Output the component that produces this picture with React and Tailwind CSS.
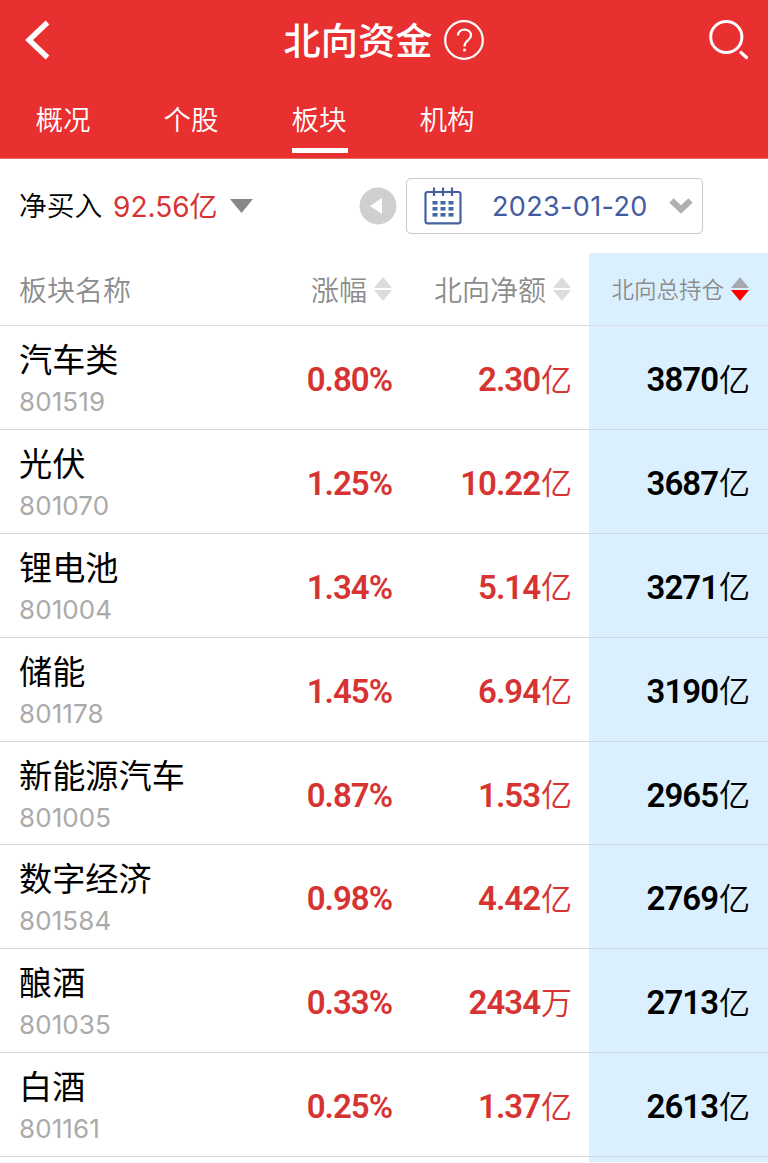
import React from 'react';

const TABS = ['概况', '个股', '板块', '机构'];

const ROWS = [
  { name: '汽车类', code: '801519', change: '0.80%', net: '2.30', netUnit: '亿', total: '3870' },
  { name: '光伏', code: '801070', change: '1.25%', net: '10.22', netUnit: '亿', total: '3687' },
  { name: '锂电池', code: '801004', change: '1.34%', net: '5.14', netUnit: '亿', total: '3271' },
  { name: '储能', code: '801178', change: '1.45%', net: '6.94', netUnit: '亿', total: '3190' },
  { name: '新能源汽车', code: '801005', change: '0.87%', net: '1.53', netUnit: '亿', total: '2965' },
  { name: '数字经济', code: '801584', change: '0.98%', net: '4.42', netUnit: '亿', total: '2769' },
  { name: '酿酒', code: '801035', change: '0.33%', net: '2434', netUnit: '万', total: '2713' },
  { name: '白酒', code: '801161', change: '0.25%', net: '1.37', netUnit: '亿', total: '2613' },
];

const SortIcon = ({ up = '#dcdcdc', down = '#dcdcdc' }) => (
  <svg width="18" height="24" viewBox="0 0 18 24" className="shrink-0">
    <path d="M9 0 L18 11 H0 Z" fill={up} />
    <path d="M0 13 H18 L9 24 Z" fill={down} />
  </svg>
);

const CalendarIcon = () => (
  <svg width="38" height="38" viewBox="0 0 38 38" fill="none" className="shrink-0">
    <rect x="1.5" y="5" width="35" height="31.3" rx="2" stroke="#4560a3" strokeWidth="2.2" />
    <path d="M10 0.5 V9 M19 0.5 V9 M28 0.5 V9" stroke="#4560a3" strokeWidth="2.2" />
    {[8.5, 16.5, 24.5].map((x) =>
      [14, 20, 26].map((y) => (
        <rect key={`${x}-${y}`} x={x} y={y} width="5" height="3.6" fill="#3f6aa6" />
      ))
    )}
  </svg>
);

const Value = ({ number, unit }) => (
  <span className="flex items-center h-10 whitespace-nowrap">
    <span className="font-['Roboto'] font-semibold text-[33px] leading-10 tracking-[-1px]">{number}</span>
    {unit && <span className="font-[350] text-[31px] leading-9 pb-px ml-px -mr-px">{unit}</span>}
  </span>
);

export default function App() {
  return (
    <div className="w-[768px] h-[1163px] overflow-hidden bg-white text-black font-['Inter','Noto_Sans_CJK_SC',sans-serif]">
      {/* 顶部导航 */}
      <header className="h-[159px] bg-[#e83030] text-white border-b border-[#e07060]">
        <div className="h-20 flex items-center justify-between pl-[22px] pr-[18px]">
          <svg width="28" height="40" viewBox="0 0 28 40" fill="none">
            <path d="M25.5 2.5 L7 20 L25.5 37.5" stroke="white" strokeWidth="5.4" />
          </svg>
          <div className="flex items-center gap-3 pl-[10px]">
            <h1 className="font-medium text-[37.2px] leading-[54px] pt-[3px]">北向资金</h1>
            <svg width="40" height="40" viewBox="0 0 40 40" fill="none" stroke="white">
              <circle cx="20" cy="20" r="18.8" strokeWidth="2.2" />
              <path d="M14 15.5 C14 7.6 27 7.6 27 15.5 C27 20.5 20.5 20 20.5 26.5" strokeWidth="2.2" />
              <path d="M20.5 28.7 V31.4" strokeWidth="2.6" />
            </svg>
          </div>
          <svg width="42" height="42" viewBox="0 0 42 42" fill="none" stroke="white" strokeLinecap="round">
            <circle cx="18.3" cy="18" r="15.6" strokeWidth="3" />
            <path d="M33 33.5 L38.5 38.5" strokeWidth="3.2" />
          </svg>
        </div>
        <nav className="flex">
          {TABS.map((tab) => (
            <div key={tab} className="w-32 h-[73px] flex flex-col items-center pt-5">
              <span className="font-[350] text-[27.5px] leading-10 pr-0.5">{tab}</span>
              {tab === '板块' && <span className="w-14 h-[5px] mt-2 bg-white" />}
            </div>
          ))}
        </nav>
      </header>

      {/* 净买入 + 日期 */}
      <div className="h-[94px] flex items-center pl-[19px] pr-[65px]">
        <span className="text-[27.7px] font-[350] pt-0.5">净买入</span>
        <span className="text-[28px] text-[#d63432] ml-[11px] pt-px">92.56亿</span>
        <svg width="23" height="14" viewBox="0 0 23 14" className="ml-3">
          <path d="M0 0 H23 L11.5 14 Z" fill="#888" />
        </svg>
        <svg width="38" height="38" viewBox="0 0 38 38" className="ml-auto">
          <circle cx="19" cy="19" r="18.5" fill="#cfcfcf" />
          <path d="M11 19 L23 11 V27 Z" fill="white" />
        </svg>
        <div className="w-[297px] h-14 ml-[9px] flex items-center border border-[#c8c8c8] rounded-[5px] pl-[17px] pr-[9px]">
          <CalendarIcon />
          <span className="text-[27px] tracking-[0.35px] text-[#435b9f] ml-[30px] pt-0.5">2023-01-20</span>
          <svg width="24" height="18" viewBox="0 0 24 18" fill="none" className="ml-auto">
            <path d="M2.5 3.5 L12 12.5 L21.5 3.5" stroke="#b0b0b0" strokeWidth="6" />
          </svg>
        </div>
      </div>

      {/* 表头 */}
      <div className="h-[73px] flex border-b border-[#dcdcdc] text-[#8c8c8c] text-[28px] font-[350]">
        <div className="w-[200px] pl-[19px] pt-[3px] flex items-center">板块名称</div>
        <div className="w-[192px] flex items-center justify-end gap-[7px]"><span className="pt-[3px]">涨幅</span><SortIcon /></div>
        <div className="w-[197px] pr-[18px] flex items-center justify-end gap-[7px]"><span className="pt-[3px]">北向净额</span><SortIcon /></div>
        <div className="w-[179px] pr-[19px] bg-[#dbf0fe] flex items-center justify-end gap-[7px] text-[22.5px]">
          <span className="pt-px">北向总持仓</span><SortIcon up="#a5a9ac" down="#ff0000" />
        </div>
      </div>

      {/* 板块列表 */}
      {ROWS.map((row) => (
        <div key={row.code} className="h-[103.9px] flex shadow-[inset_0_-1px_#d8d8d8]">
          <div className="w-[250px] pl-[19px] pt-[11px]">
            <div className="text-[33.2px] leading-[46px]">{row.name}</div>
            <div className="text-[26px] leading-[37px] text-[#aaa] tracking-[0.1px]">{row.code}</div>
          </div>
          <div className="w-[142px] pt-[34px] flex items-start justify-end text-[#d63432]">
            <Value number={row.change} />
          </div>
          <div className="w-[197px] pt-[34px] pr-[18px] flex items-start justify-end text-[#d63432]">
            <Value number={row.net} unit={row.netUnit} />
          </div>
          <div className="w-[179px] pt-[34px] pr-[19px] flex items-start justify-end bg-[#dbf0fe] shadow-[inset_0_-1px_#d0d7da]">
            <Value number={row.total} unit="亿" />
          </div>
        </div>
      ))}
      <div className="h-[5px] w-[179px] ml-auto bg-[#dbf0fe]" />
    </div>
  );
}
